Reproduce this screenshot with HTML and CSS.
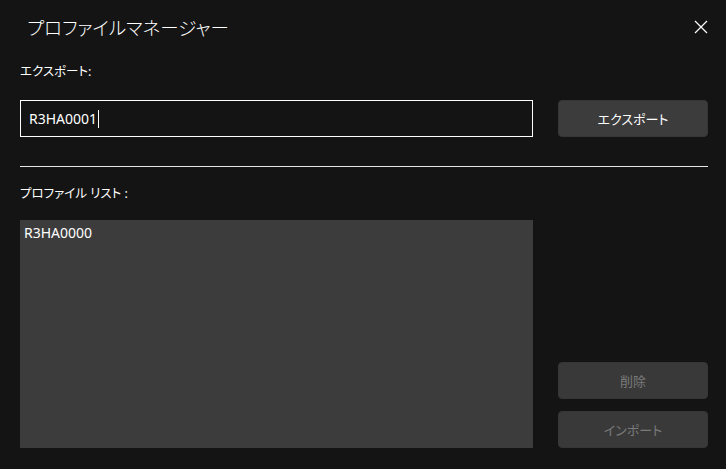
FILE: index.html
```html
<!DOCTYPE html>
<html lang="ja">
<head>
  <meta charset="UTF-8" />
  <meta name="viewport" content="width=device-width, initial-scale=1" />
  <title>プロファイルマネージャー</title>
  <link rel="stylesheet" href="styles.css">
</head>
<body>
  <!-- HEADER -->
  <div class="dialog-header">
    <h1>プロファイルマネージャー</h1>
    <button class="close-btn" aria-label="閉じる">
      <svg width="14" height="14" viewBox="0 0 14 14">
        <path d="M1 1 L13 13 M13 1 L1 13" stroke="#fff" stroke-width="1.2" fill="none" />
      </svg>
    </button>
  </div>

  <!-- EXPORT -->
  <div class="section-label">エクスポート:</div>
  <div class="export-row">
    <div class="text-input">R3HA0001<span class="caret"></span></div>
    <button class="btn">エクスポート</button>
  </div>

  <hr class="divider" />

  <!-- PROFILE LIST -->
  <div class="section-label list-label">プロファイル リスト :</div>
  <div class="list-row">
    <div class="profile-list">
      <div class="profile-item">R3HA0000</div>
    </div>
    <div class="list-actions">
      <button class="btn" disabled>削除</button>
      <button class="btn" disabled>インポート</button>
    </div>
  </div>
</body>
</html>
```

FILE: styles.css
```css
body {
  margin: 0;
  padding: 0 18px 21px 20px;
  height: 469px;
  box-sizing: border-box;
  background-color: #141414;
  color: #fff;
  font-family: "Segoe UI", "Noto Sans", "Noto Sans CJK JP", sans-serif;
  font-feature-settings: "palt";
  display: flex;
  flex-direction: column;
  overflow: hidden;
}

.dialog-header {
  display: flex;
  align-items: center;
  justify-content: space-between;
  height: 54px;
}
.dialog-header h1 {
  margin: 0 0 0 7px;
  font-size: 18.5px;
  font-weight: 300;
}
.close-btn {
  background: none;
  border: none;
  padding: 0;
  width: 14px;
  height: 14px;
  display: flex;
  cursor: pointer;
}

.section-label {
  font-size: 12.5px;
  line-height: 18px;
  margin-top: 9px;
}
.list-label {
  margin-top: 18px;
}

.export-row {
  display: flex;
  gap: 25px;
  margin-top: 19px;
}
.text-input {
  flex: 1;
  height: 37px;
  box-sizing: border-box;
  border: 1px solid #fff;
  background-color: #141414;
  padding: 0 8px;
  font-size: 14px;
  display: flex;
  align-items: center;
}
.caret {
  display: inline-block;
  width: 1px;
  height: 18px;
  background-color: #fff;
  margin-left: 1px;
}

.btn {
  width: 150px;
  height: 37px;
  background-color: #3c3c3c;
  border: 1px solid #363636;
  border-radius: 4px;
  color: #fff;
  font-family: inherit;
  font-feature-settings: "palt";
  font-size: 13px;
  cursor: pointer;
}
.btn:disabled {
  color: #7a7a7a;
  background-color: #393939;
  cursor: default;
}

.divider {
  border: none;
  border-top: 1px solid #e6e6e6;
  margin: 29px 0 0 0;
}

.list-row {
  flex: 1;
  display: flex;
  gap: 25px;
  margin-top: 17px;
}
.profile-list {
  flex: 1;
  background-color: #3c3c3c;
  padding: 3px 4px;
}
.profile-item {
  font-size: 14px;
  line-height: 20px;
}
.list-actions {
  display: flex;
  flex-direction: column;
  justify-content: flex-end;
  gap: 12px;
}
```
